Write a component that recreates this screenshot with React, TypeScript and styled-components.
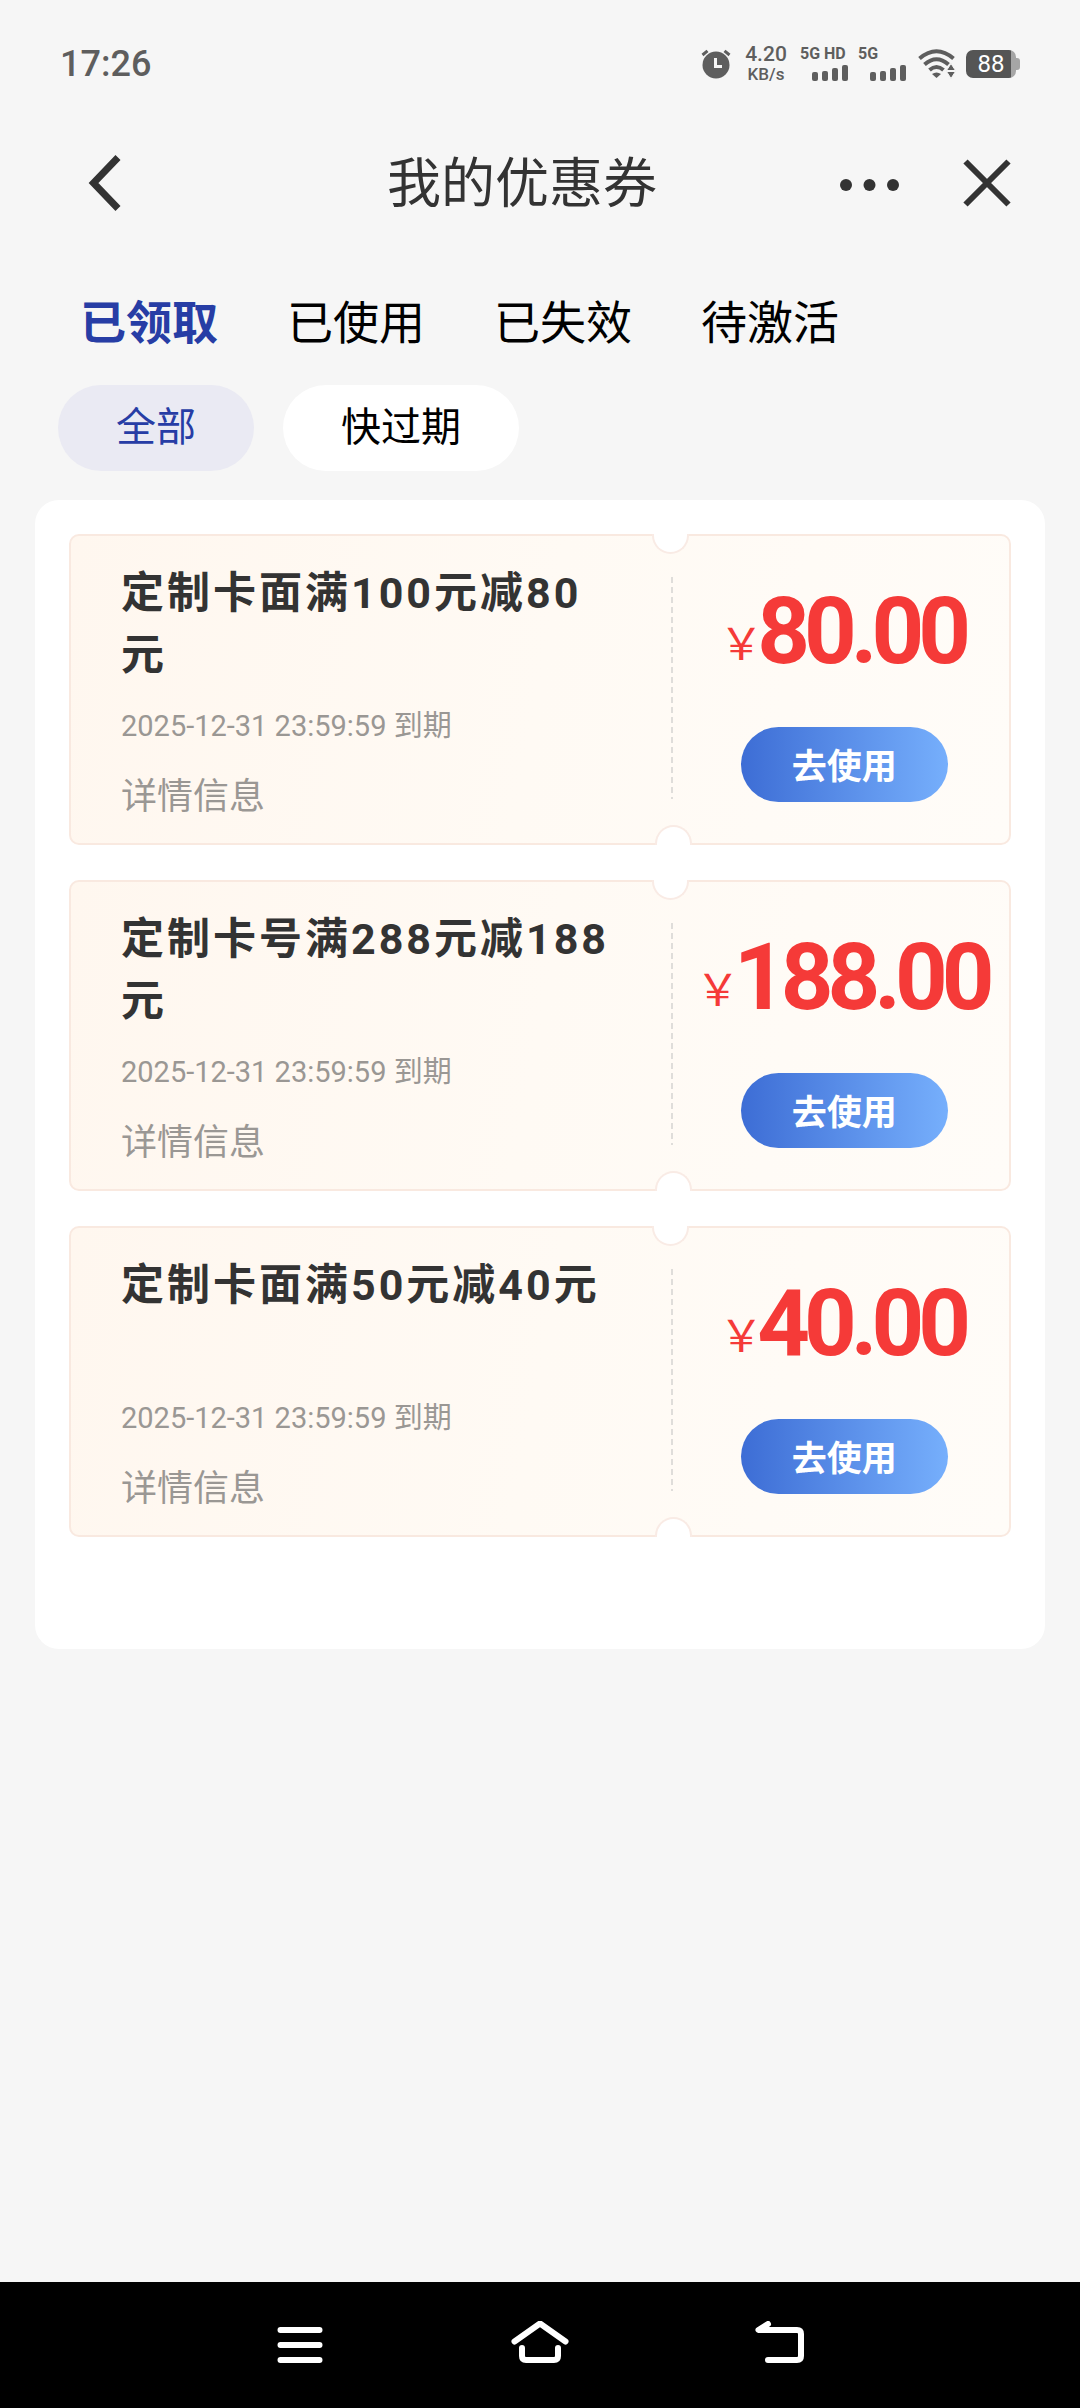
import React, { useState } from "react";
import styled, { createGlobalStyle } from "styled-components";

const GlobalStyle = createGlobalStyle`
  *, *::before, *::after { box-sizing: border-box; }
  body {
    margin: 0;
    background: #f6f6f6;
    font-family: Roboto, "Noto Sans CJK SC", sans-serif;
    color: #333;
  }
  button {
    margin: 0;
    padding: 0;
    border: 0;
    background: none;
    font: inherit;
    color: inherit;
    cursor: pointer;
  }
  svg { display: block; }
`;

const Page = styled.div`
  display: flex;
  flex-direction: column;
  min-height: 100vh;
`;

const StatusBar = styled.div`
  display: flex;
  align-items: center;
  justify-content: space-between;
  height: 128px;
  padding: 0 60px;
  color: #5e5e5e;
`;

const Clock = styled.span`
  font-size: 36px;
  line-height: 40px;
  font-weight: 500;
`;

const StatusIcons = styled.div`
  display: flex;
  align-items: center;
  gap: 10px;
`;

const Speed = styled.div`
  display: flex;
  flex-direction: column;
  align-items: center;
  width: 48px;
  font-weight: 500;
`;

const SpeedValue = styled.span`
  font-size: 21px;
  line-height: 20px;
`;

const SpeedUnit = styled.span`
  font-size: 17px;
  line-height: 20px;
`;

const Signal = styled.div`
  display: flex;
  flex-direction: column;
  gap: 4px;
  width: 48px;
`;

const SignalLabel = styled.span`
  font-size: 16px;
  line-height: 14px;
  font-weight: 700;
  white-space: nowrap;
`;

const SignalBars = styled.div`
  display: flex;
  align-items: flex-end;
  justify-content: flex-end;
  gap: 4px;
  height: 16px;
`;

const Bar = styled.i<{ $height: number }>`
  width: 6px;
  height: ${(p) => p.$height}px;
  border-radius: 2px;
  background: currentColor;
`;

const Battery = styled.div`
  position: relative;
  display: flex;
  align-items: center;
  justify-content: center;
  width: 50px;
  height: 28px;
  margin-right: 4px;
  border-radius: 7px;
  background: linear-gradient(to right, #555 45px, #a6a6a6 45px);
  color: #fff;
  font-size: 24px;
  line-height: 28px;

  &::after {
    content: "";
    position: absolute;
    right: -4px;
    top: 8px;
    width: 4px;
    height: 12px;
    border-radius: 0 3px 3px 0;
    background: #a6a6a6;
  }
`;

const Header = styled.header`
  display: grid;
  grid-template-columns: 200px 1fr 236px;
  align-items: center;
  height: 110px;
`;

const HeaderTitle = styled.h1`
  margin: 0;
  padding-top: 4px;
  font-size: 54px;
  line-height: 72px;
  font-weight: 400;
  text-align: center;
`;

const BackButton = styled.button`
  display: flex;
  justify-self: start;
  padding: 12px 24px;
  margin-left: 64px;
`;

const HeaderActions = styled.div`
  display: flex;
  align-items: center;
  justify-content: space-between;
  margin-left: -4px;
  padding-right: 69px;
`;

const Tabs = styled.nav`
  display: flex;
  gap: 69px;
  padding: 53px 80px 0;
`;

const Tab = styled.button<{ $active: boolean }>`
  font-size: 46px;
  line-height: 64px;
  font-weight: ${(p) => (p.$active ? 700 : 400)};
  color: ${(p) => (p.$active ? "#273da5" : "#000")};
`;

const Filters = styled.div`
  display: flex;
  gap: 29px;
  padding: 30px 58px 29px;
`;

const Filter = styled.button<{ $active: boolean }>`
  height: 86px;
  padding: 0 58px;
  border-radius: 43px;
  font-size: 40px;
  line-height: 56px;
  background: ${(p) => (p.$active ? "#eaeaf3" : "#fff")};
  color: ${(p) => (p.$active ? "#273da5" : "#000")};
`;

const Panel = styled.main`
  display: flex;
  flex-direction: column;
  gap: 35px;
  margin: 0 35px auto;
  padding: 34px 34px 112px;
  border-radius: 24px;
  background: #fff;
`;

const Card = styled.article`
  position: relative;
  display: grid;
  grid-template-columns: 64% 2px 1fr;
  border: 2px solid #f9e9e0;
  border-radius: 10px;
  background: linear-gradient(100deg, #fff7ef, #fffaf4 50%, #fffcf8);
`;

const Notch = styled.i<{ $edge: "top" | "bottom" }>`
  position: absolute;
  left: calc(64% - 19px + ${(p) => (p.$edge === "top" ? 0 : 3)}px);
  ${(p) => p.$edge}: -2px;
  width: 37px;
  height: 20px;
  border: 2px solid #f9ebe5;
  border-${(p) => p.$edge}: 0;
  border-radius: ${(p) => (p.$edge === "top" ? "0 0 19px 19px" : "19px 19px 0 0")};
  background: #fff;
`;

const Info = styled.div`
  display: flex;
  flex-direction: column;
  align-items: flex-start;
  padding: 26px 54px 22px 50px;
`;

const CardTitle = styled.h2`
  min-height: 124px;
  margin: 0;
  font-size: 43px;
  line-height: 62px;
  font-weight: 700;
  letter-spacing: 3px;
`;

const Expiry = styled.time`
  margin-top: 18px;
  font-size: 29px;
  line-height: 44px;
  color: #9a9794;
`;

const DetailButton = styled.button`
  margin-top: 25px;
  font-size: 36px;
  line-height: 48px;
  color: #9a9794;
`;

const Divider = styled.i`
  margin: 41px 0 44px;
  background: repeating-linear-gradient(to bottom, #dfddda 0 6px, transparent 6px 10px);
`;

const Offer = styled.div`
  display: flex;
  flex-direction: column;
  align-items: center;
  gap: 49px;
  padding: 50px 0 0 6px;
`;

const Amount = styled.div`
  padding-right: 4px;
  font-size: 92px;
  line-height: 92px;
  font-weight: 700;
  letter-spacing: -6px;
  white-space: nowrap;
  color: #f53a38;
`;

const Currency = styled.span`
  font-family: "Noto Sans CJK SC", sans-serif;
  font-size: 44px;
  line-height: 44px;
  font-weight: 400;
  vertical-align: 3px;
`;

const UseButton = styled.button`
  width: 207px;
  height: 75px;
  padding-top: 6px;
  border-radius: 38px;
  background: linear-gradient(to right, #3d6dd5, #76affc);
  color: #fff;
  font-size: 35px;
  line-height: 48px;
  font-weight: 700;
`;

const SystemNav = styled.footer`
  display: flex;
  align-items: center;
  justify-content: center;
  gap: 180px;
  height: 126px;
  background: #000;
`;

const NavButton = styled.button`
  display: flex;
`;

const AlarmIcon = () => (
  <svg width="32" height="30" viewBox="0 0 32 30" aria-hidden="true">
    <circle cx="16" cy="16" r="13.5" fill="#5e5e5e" />
    <path d="M2.500 6 L7.500 1.800 M29.500 6 L24.500 1.800" stroke="#5e5e5e" strokeWidth="3" fill="none" />
    <path d="M15.500 9 V17.500 H22" stroke="#f6f6f6" strokeWidth="3" fill="none" />
  </svg>
);

const WifiSvg = styled.svg`
  margin-left: 2px;
`;

const WifiIcon = () => (
  <WifiSvg width="38" height="30" viewBox="0 0 38 30" aria-hidden="true" fill="none" stroke="#5e5e5e" strokeWidth="4">
    <path d="M1.500 9.500 Q18.500 -5 35.500 9.500" />
    <path d="M6.500 15.500 Q18.500 5 30.500 15.500" />
    <path d="M11.500 21 Q18.500 15 25.500 21" />
    <path d="M14 25 Q18.500 22 23 25 L18.500 29 Z" fill="#5e5e5e" stroke="none" />
    <path d="M33 14.500 L37.500 21.500 H28.500 Z M28.500 22.500 H37.500 L33 29.500 Z" fill="#5e5e5e" stroke="#f6f6f6" strokeWidth="1" />
  </WifiSvg>
);

const BackIcon = () => (
  <svg width="34" height="58" viewBox="0 0 34 58" aria-hidden="true">
    <path d="M30 3.500 L5.500 29 L30 54.500" fill="none" stroke="#333" strokeWidth="7" />
  </svg>
);

const MoreIcon = () => (
  <svg width="60" height="16" viewBox="0 0 60 16" aria-hidden="true" fill="#333">
    <circle cx="6" cy="10" r="6" />
    <circle cx="29.500" cy="10" r="6" />
    <circle cx="53" cy="10" r="6" />
  </svg>
);

const CloseIcon = () => (
  <svg width="48" height="48" viewBox="0 0 48 48" aria-hidden="true">
    <path d="M2.500 2.500 L45.500 45.500 M45.500 2.500 L2.500 45.500" stroke="#333" strokeWidth="6" />
  </svg>
);

const navStroke = { fill: "none", stroke: "#fff", strokeWidth: 6, strokeLinecap: "round", strokeLinejoin: "round" } as const;

const RecentsIcon = () => (
  <svg width="60" height="48" viewBox="0 0 60 48" aria-hidden="true" {...navStroke}>
    <path d="M10.500 9 H49.500 M10.500 24 H49.500 M10.500 39 H49.500" />
  </svg>
);

const HomeIcon = () => (
  <svg width="60" height="48" viewBox="0 0 60 48" aria-hidden="true" {...navStroke}>
    <path d="M4.500 20.500 L30 2.500 L55.500 20.500" />
    <path d="M12 27 V35 Q12 39 16 39 H44 Q48 39 48 35 V27" />
  </svg>
);

const ReturnIcon = () => (
  <svg width="60" height="48" viewBox="0 0 60 48" aria-hidden="true" {...navStroke}>
    <path d="M18 3 L8.500 9 H47 Q51 9 51 13 V35 Q51 39 47 39 H18" />
  </svg>
);

const barHeights = [9, 10, 13, 16];

const SignalGroup = ({ label }: { label: string }) => (
  <Signal>
    <SignalLabel>{label}</SignalLabel>
    <SignalBars>
      {barHeights.map((h) => (
        <Bar key={h} $height={h} />
      ))}
    </SignalBars>
  </Signal>
);

const tabs = ["已领取", "已使用", "已失效", "待激活"];
const filters = ["全部", "快过期"];
const coupons = [
  { title: "定制卡面满100元减80元", amount: "80.00", expires: "2025-12-31 23:59:59" },
  { title: "定制卡号满288元减188元", amount: "188.00", expires: "2025-12-31 23:59:59" },
  { title: "定制卡面满50元减40元", amount: "40.00", expires: "2025-12-31 23:59:59" },
];

export default function App() {
  const [tab, setTab] = useState(tabs[0]);
  const [filter, setFilter] = useState(filters[0]);

  return (
    <Page>
      <GlobalStyle />
      <StatusBar>
        <Clock>17:26</Clock>
        <StatusIcons>
          <AlarmIcon />
          <Speed>
            <SpeedValue>4.20</SpeedValue>
            <SpeedUnit>KB/s</SpeedUnit>
          </Speed>
          <SignalGroup label="5G HD" />
          <SignalGroup label="5G" />
          <WifiIcon />
          <Battery>88</Battery>
        </StatusIcons>
      </StatusBar>

      <Header>
        <BackButton aria-label="返回">
          <BackIcon />
        </BackButton>
        <HeaderTitle>我的优惠券</HeaderTitle>
        <HeaderActions>
          <button aria-label="更多">
            <MoreIcon />
          </button>
          <button aria-label="关闭">
            <CloseIcon />
          </button>
        </HeaderActions>
      </Header>

      <Tabs>
        {tabs.map((name) => (
          <Tab key={name} $active={name === tab} onClick={() => setTab(name)}>
            {name}
          </Tab>
        ))}
      </Tabs>

      <Filters>
        {filters.map((name) => (
          <Filter key={name} $active={name === filter} onClick={() => setFilter(name)}>
            {name}
          </Filter>
        ))}
      </Filters>

      <Panel>
        {coupons.map((coupon) => (
          <Card key={coupon.title}>
            <Info>
              <CardTitle>{coupon.title}</CardTitle>
              <Expiry>{coupon.expires} 到期</Expiry>
              <DetailButton>详情信息</DetailButton>
            </Info>
            <Divider />
            <Offer>
              <Amount>
                <Currency>￥</Currency>
                {coupon.amount}
              </Amount>
              <UseButton>去使用</UseButton>
            </Offer>
            <Notch $edge="top" />
            <Notch $edge="bottom" />
          </Card>
        ))}
      </Panel>

      <SystemNav>
        <NavButton aria-label="最近任务">
          <RecentsIcon />
        </NavButton>
        <NavButton aria-label="主屏幕">
          <HomeIcon />
        </NavButton>
        <NavButton aria-label="返回上一页">
          <ReturnIcon />
        </NavButton>
      </SystemNav>
    </Page>
  );
}
